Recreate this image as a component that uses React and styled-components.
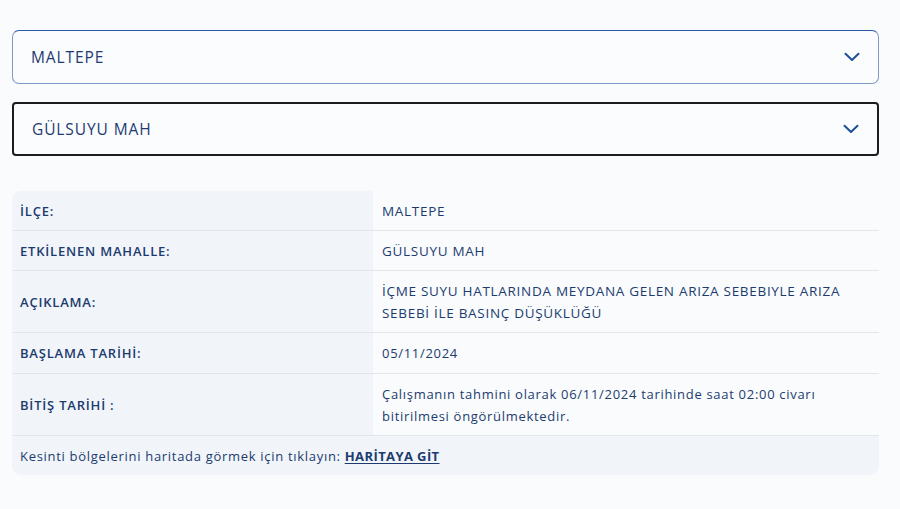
import React from "react";
import styled, { createGlobalStyle } from "styled-components";

const Global = createGlobalStyle`
  html, body { margin: 0; padding: 0; background: #f9fbfd; }
  body { font-family: "Open Sans", "Noto Sans", sans-serif; color: #1d3b6e; }
`;

const Page = styled.div`
  padding: 30px 21px 34px 12px;
  display: flex;
  flex-direction: column;
`;

const Select = styled.div`
  height: 54px;
  box-sizing: border-box;
  display: flex;
  align-items: center;
  justify-content: space-between;
  padding: 0 18px 0 18px;
  background: #fafcfe;
  border: ${(p) => (p.$focused ? "2px solid #1c1c1c" : "1px solid #8099c4")};
  border-top-color: ${(p) => (p.$focused ? "#1c1c1c" : "#2b59a3")};
  border-radius: ${(p) => (p.$focused ? "4px" : "7px")};
  margin-bottom: ${(p) => p.$mb || 0}px;
  font-size: 15.5px;
  font-weight: 500;
  letter-spacing: 0.9px;
  color: #1e3a70;
`;

const Chevron = () => (
  <svg width="16" height="10" viewBox="0 0 16 10" fill="none">
    <path d="M1.5 1.8 L8 8 L14.5 1.8" stroke="#1f4f97" strokeWidth="2" strokeLinecap="round" strokeLinejoin="round" />
  </svg>
);

const Card = styled.div`
  margin-top: 35px;
  border-radius: 9px;
  overflow: hidden;
  background: #f1f5fa;
`;

const Row = styled.div`
  display: grid;
  grid-template-columns: 361px 1fr;
  border-bottom: 1px solid #e2e6ec;
  min-height: ${(p) => p.$h}px;
  box-sizing: border-box;
`;

const Label = styled.div`
  display: flex;
  align-items: center;
  padding: 0 8px;
  background: #f1f5fa;
  font-size: 13px;
  font-weight: 600;
  letter-spacing: 0.8px;
  color: #1d3b6e;
`;

const Value = styled.div`
  display: flex;
  align-items: center;
  padding: 0 30px 0 9px;
  background: #f9fbfd;
  font-size: ${(p) => (p.$upper ? "13.5px" : "13px")};
  letter-spacing: 0.7px;
  line-height: 22px;
  color: #1d3b6e;
`;

const Footer = styled.div`
  height: 39px;
  display: flex;
  align-items: center;
  padding: 0 8px;
  font-size: 13px;
  letter-spacing: 0.7px;
  color: #1d3b6e;
`;

const Link = styled.a`
  margin-left: 4px;
  font-weight: 700;
  letter-spacing: 0.4px;
  color: #1d3b6e;
  text-decoration: underline;
  text-underline-offset: 2px;
`;

const rows = [
  { l: "İLÇE:", v: "MALTEPE", h: 40, u: true },
  { l: "ETKİLENEN MAHALLE:", v: "GÜLSUYU MAH", h: 40, u: true },
  { l: "AÇIKLAMA:", v: "İÇME SUYU HATLARINDA MEYDANA GELEN ARIZA SEBEBIYLE ARIZA SEBEBİ İLE BASINÇ DÜŞÜKLÜĞÜ", h: 62, u: true },
  { l: "BAŞLAMA TARİHİ:", v: "05/11/2024", h: 41 },
  { l: "BİTİŞ TARİHİ :", v: "Çalışmanın tahmini olarak 06/11/2024 tarihinde saat 02:00 civarı bitirilmesi öngörülmektedir.", h: 62 },
];

export default function App() {
  return (
    <>
      <Global />
      <Page>
        <Select $mb={18}>
          <span>MALTEPE</span>
          <Chevron />
        </Select>
        <Select $focused>
          <span>GÜLSUYU MAH</span>
          <Chevron />
        </Select>
        <Card>
          {rows.map((r) => (
            <Row key={r.l} $h={r.h}>
              <Label>{r.l}</Label>
              <Value $upper={r.u}>{r.v}</Value>
            </Row>
          ))}
          <Footer>
            Kesinti bölgelerini haritada görmek için tıklayın:
            <Link href="#">HARİTAYA GİT</Link>
          </Footer>
        </Card>
      </Page>
    </>
  );
}
